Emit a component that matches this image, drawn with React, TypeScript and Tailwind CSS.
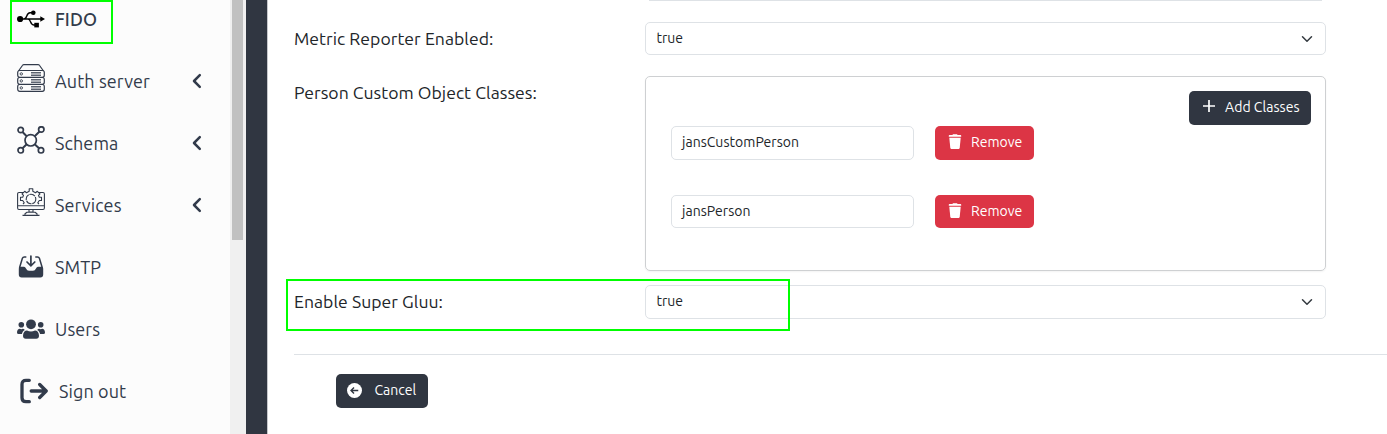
import React from "react";

const navRow = "flex h-[62px] items-center pl-[17px] pr-[26px]";

function UsbIcon() {
  return (
    <svg width="28" height="28" viewBox="0 0 28 28" fill="none" stroke="#000" strokeWidth="1.400">
      <circle cx="3.100" cy="14" r="3.100" fill="#000" stroke="none" />
      <path d="M3 14H25M7 14C10.500 14 9 7.800 13 7.800H17M11 14C14 14 13 20 17 20H19" />
      <circle cx="16.300" cy="7.700" r="2.300" fill="#000" stroke="none" />
      <path d="M17.300 17.800h4.600v4.600h-4.600z" fill="#000" stroke="none" />
      <path d="M23.300 11.200L28 14L23.300 16.800z" fill="#000" stroke="none" />
    </svg>
  );
}

function ServerIcon() {
  return (
    <svg className="-mt-1.5" width="28" height="28" viewBox="0 0 28 28" fill="none" stroke="#323b4b" strokeWidth="1.200">
      <path d="M1.500 7L5.600 1.300Q6 .6 7 .6H21Q22 .6 22.400 1.300L26.500 7" />
      {[6.500, 13.500, 20.500].map((y) => (
        <g key={y}>
          <rect x="0.700" y={y} width="26.600" height="6.800" rx="2" />
          <circle cx="4.300" cy={y + 3.400} r="1.200" strokeWidth="0.900" />
          <path d={`M14 ${y + 2}H24M14 ${y + 3.500}H24M14 ${y + 5}H24`} strokeWidth="0.800" />
        </g>
      ))}
    </svg>
  );
}

function SchemaIcon() {
  return (
    <svg className="-mt-1.5" width="28" height="28" viewBox="0 0 28 28" fill="none" stroke="#323b4b" strokeWidth="1.700">
      <circle cx="13.700" cy="14.300" r="5.700" />
      <circle cx="3.700" cy="4" r="2.700" />
      <circle cx="24.300" cy="3.500" r="2.700" />
      <circle cx="3.700" cy="24.300" r="2.700" />
      <circle cx="24" cy="24.300" r="2.700" />
      <path d="M5.500 6L9.700 10.200M22.500 5.500L17.700 10.200M5.500 22.300L9.700 18.300M22 22.300L17.700 18.300" strokeWidth="2" />
    </svg>
  );
}

function ServicesIcon() {
  return (
    <svg className="-mt-1.5" width="28" height="28" viewBox="0 0 28 28" fill="none" stroke="#323b4b" strokeWidth="1.100" strokeLinejoin="round">
      <path d="M7 4.500H2Q.6 4.500 .6 6V20Q.6 21.500 2 21.500H26Q27.400 21.500 27.400 20V6Q27.400 4.500 26 4.500H21M.6 17.700H27.400M12 21.500V24H16V21.500M8 27.300V25.700L10 24.300H18L20 25.700V27.300M5.500 27.400H22.500" />
      <circle cx="14" cy="11" r="4.800" strokeDasharray="6 .8" />
      <path d="M6 16L7.200 14.800L5.700 12.500H3.500V9.300H5.700L6.500 7.400L5 5.800L7.700 3.300L9.500 4.700L12.200 3.300V.7H15.800V3.300L18.500 4.700L20.300 3.300L23 5.800L21.500 7.400L22.300 9.300H24.500V12.500H22.300L20.800 14.800L22 16" />
    </svg>
  );
}

function InboxIcon() {
  return (
    <svg width="28" height="28" viewBox="0 0 28 28" fill="none" stroke="#323b4b">
      <path d="M8.800 3.900H7.300Q5.900 3.900 5.400 5.200L2.600 14.500M18.800 3.900H20.500Q21.900 3.900 22.400 5.200L25.200 14.500" strokeWidth="1.500" strokeLinecap="round" />
      <path d="M13.900 3V12.300M10 9L13.900 12.800L17.800 9" strokeWidth="1.700" strokeLinecap="round" />
      <path d="M1.800 15.500Q1.800 13.800 3.500 13.800H7Q8.300 13.800 9 15.500Q10 17.800 12 17.800H16Q18 17.800 19 15.500Q19.700 13.800 21 13.800H24.500Q26.200 13.800 26.200 15.500V21.500Q26.200 24.500 23.300 24.500H4.700Q1.800 24.500 1.800 21.500Z" fill="#323b4b" stroke="none" />
    </svg>
  );
}

function UsersIcon() {
  return (
    <svg width="28" height="28" viewBox="0 0 28 28" fill="#323b4b">
      <circle cx="14" cy="9.300" r="4.900" />
      <circle cx="4.300" cy="9.800" r="2.800" />
      <circle cx="23.700" cy="9.800" r="2.800" />
      <path d="M6 20.800C6 17.500 8 15.600 10 15.600Q14 17.300 18 15.600C20 15.600 22 17.500 22 20.800C22 22.800 21 23.800 19.200 23.800H8.800C7 23.800 6 22.800 6 20.800Z" />
      <path d="M7.800 14.900C6 15.900 5.200 17.300 4.900 19H1.500Q0 19 0 17.500C0 15.400 1.300 13.800 2.800 13.800Q4.300 14.500 5.800 13.800Q7 13.900 7.800 14.900ZM20.200 14.900C22 15.900 22.800 17.300 23.100 19H26.500Q28 19 28 17.500C28 15.400 26.700 13.800 25.200 13.800Q23.700 14.500 22.200 13.800Q21 13.900 20.200 14.900Z" />
    </svg>
  );
}

function SignOutIcon() {
  return (
    <svg className="ml-[3px] mr-[11px] shrink-0" width="28" height="28" viewBox="0 0 28 28" fill="none" stroke="#323b4b" strokeWidth="3.300" strokeLinecap="round" strokeLinejoin="round">
      <path d="M9.300 3.300H6Q2 3.300 2 7.300V20.700Q2 24.700 6 24.700H9.300" />
      <path d="M11.200 14H26M19.700 7.500L26.200 14L19.700 20.500" />
    </svg>
  );
}

function TrashIcon() {
  return (
    <svg className="mr-[9px] mt-2 shrink-0" width="14" height="15" viewBox="0 0 14 15" fill="#fff">
      <path d="M4.300 1.100L5.100.2H8.900L9.700 1.100H12.500Q13.200 1.100 13.200 1.700V2.700H.8V1.700Q.8 1.100 1.500 1.100Z" />
      <path d="M1.300 3.800H12.700L11.700 14.100Q11.600 14.900 10.800 14.900H3.200Q2.400 14.900 2.300 14.100Z" />
    </svg>
  );
}

function NavItem({ icon, children, className = "", expandable = false }: { icon: React.ReactNode; children: React.ReactNode; className?: string; expandable?: boolean }) {
  return (
    <a className={navRow}>
      <span className="flex w-[38px] shrink-0">{icon}</span>
      <span className={`whitespace-nowrap text-[18px] leading-6 tracking-[0.090px] ${className}`}>{children}</span>
      {expandable && (
        <svg className="ml-auto" width="14" height="16" viewBox="0 0 14 16" fill="none" stroke="#323b4b" strokeWidth="2.500" strokeLinecap="round" strokeLinejoin="round">
          <path d="M9.800 2.200L4 8L9.800 13.800" />
        </svg>
      )}
    </a>
  );
}

function SelectBox({ className }: { className: string }) {
  return (
    <div className={`flex w-[681px] justify-between rounded-[5px] border border-[#dee2e6] pl-[10.500px] pr-3 ${className}`}>
      <span className="text-[14px] leading-[30px]">true</span>
      <svg className="self-center" width="12" height="12" viewBox="0 0 16 16" fill="none" stroke="#343a40" strokeWidth="2" strokeLinecap="round" strokeLinejoin="round"><path d="M2 5L8 11L14 5" /></svg>
    </div>
  );
}

function ClassRow({ name, className }: { name: string; className: string }) {
  return (
    <div className={`flex gap-[21px] ${className}`}>
      <div className="w-[243px] rounded-[5px] border border-[#dee2e6] pl-[10px] text-[14px] leading-[30px] tracking-[0.050px]">{name}</div>
      <button className="flex w-[99px] rounded-[5px] bg-[#dc3545] pl-[13px] text-[14px] leading-8 text-white">
        <TrashIcon />
        Remove
      </button>
    </div>
  );
}

export default function App() {
  return (
    <div className="relative flex h-[434px] w-[1387px] overflow-hidden bg-white font-['Ubuntu','Noto_Sans',sans-serif] text-[#212529]">
      <nav className="h-full w-[230px] shrink-0 bg-[#fcfcfc] text-[#323b4b]">
        <div className="-mt-3">
          <NavItem icon={<UsbIcon />} className="font-medium">FIDO</NavItem>
          <NavItem icon={<ServerIcon />} expandable>Auth server</NavItem>
          <NavItem icon={<SchemaIcon />} expandable>Schema</NavItem>
          <NavItem icon={<ServicesIcon />} expandable>Services</NavItem>
          <NavItem icon={<InboxIcon />}>SMTP</NavItem>
          <NavItem icon={<UsersIcon />}>Users</NavItem>
          <a className={navRow}>
            <SignOutIcon />
            <span className="text-[18px] leading-6 tracking-[0.090px]">Sign out</span>
          </a>
        </div>
      </nav>
      <div className="flex w-4 shrink-0 bg-[#f0f0f0] pl-0.5">
        <div className="h-60 w-[11px] bg-[#c1c1c1]" />
      </div>
      <div className="w-[22px] shrink-0 border-r border-[#c5c7cb] bg-[#303641]" />
      <main className="flex h-full min-w-0 flex-1 flex-col pl-[26px]">
        <div className="ml-[351px] h-px w-[681px] shrink-0 px-1"><div className="h-px bg-[#dee2e6]" /></div>
        <div className="mt-[21px] flex h-[33px] shrink-0">
          <label className="w-[351px] text-[17.600px] leading-[34px] tracking-[0.040px]">Metric Reporter Enabled:</label>
          <SelectBox className="h-[33px]" />
        </div>
        <div className="mt-[21px] flex h-[195px] shrink-0">
          <label className="w-[351px] text-[17.600px] leading-[34px] tracking-[0.040px]">Person Custom Object Classes:</label>
          <section className="w-[681px] rounded-[5px] border border-[#ced0d2] pl-[25px] pr-[14px] pt-[14px] shadow-xs">
            <button className="ml-auto flex h-[34px] w-[122px] rounded-[5px] bg-[#303641] pl-[14px] text-[14px] leading-8 tracking-[0.050px] text-white">
              <svg className="mr-[10px] mt-[9px]" width="12" height="12" stroke="currentColor" strokeWidth="1.700"><path d="M6 0V12M0 6H12" /></svg>
              Add Classes
            </button>
            <ClassRow name="jansCustomPerson" className="mt-px h-[34px]" />
            <ClassRow name="jansPerson" className="mt-[35px] h-[33px]" />
          </section>
        </div>
        <div className="mt-[14px] flex h-[34px] shrink-0">
          <label className="w-[351px] text-[17.600px] leading-[34px] tracking-[0.040px]">Enable Super Gluu:</label>
          <SelectBox className="h-[34px]" />
        </div>
        <hr className="mt-[35px] border-[#dee2e6]" />
        <button className="ml-[42px] mt-[19px] flex h-[34px] w-[92px] shrink-0 rounded-[5px] bg-[#303641] pl-[11px] text-[14px] leading-8 text-white">
          <svg className="mr-[12.500px] mt-[9px]" width="15" height="15" viewBox="0 0 16 16"><circle cx="8" cy="8" r="8" fill="#fff" /><path d="M12 8H4.500M7.500 4.800L4.300 8L7.500 11.200" fill="none" stroke="#303641" strokeWidth="1.500" /></svg>
          Cancel
        </button>
      </main>
      <div className="pointer-events-none absolute left-[10px] top-0 h-11 w-[103px] border-2 border-[#00ff00]" />
      <div className="pointer-events-none absolute left-[286px] top-[279px] h-[52px] w-[504px] border-2 border-[#00ff00]" />
    </div>
  );
}
